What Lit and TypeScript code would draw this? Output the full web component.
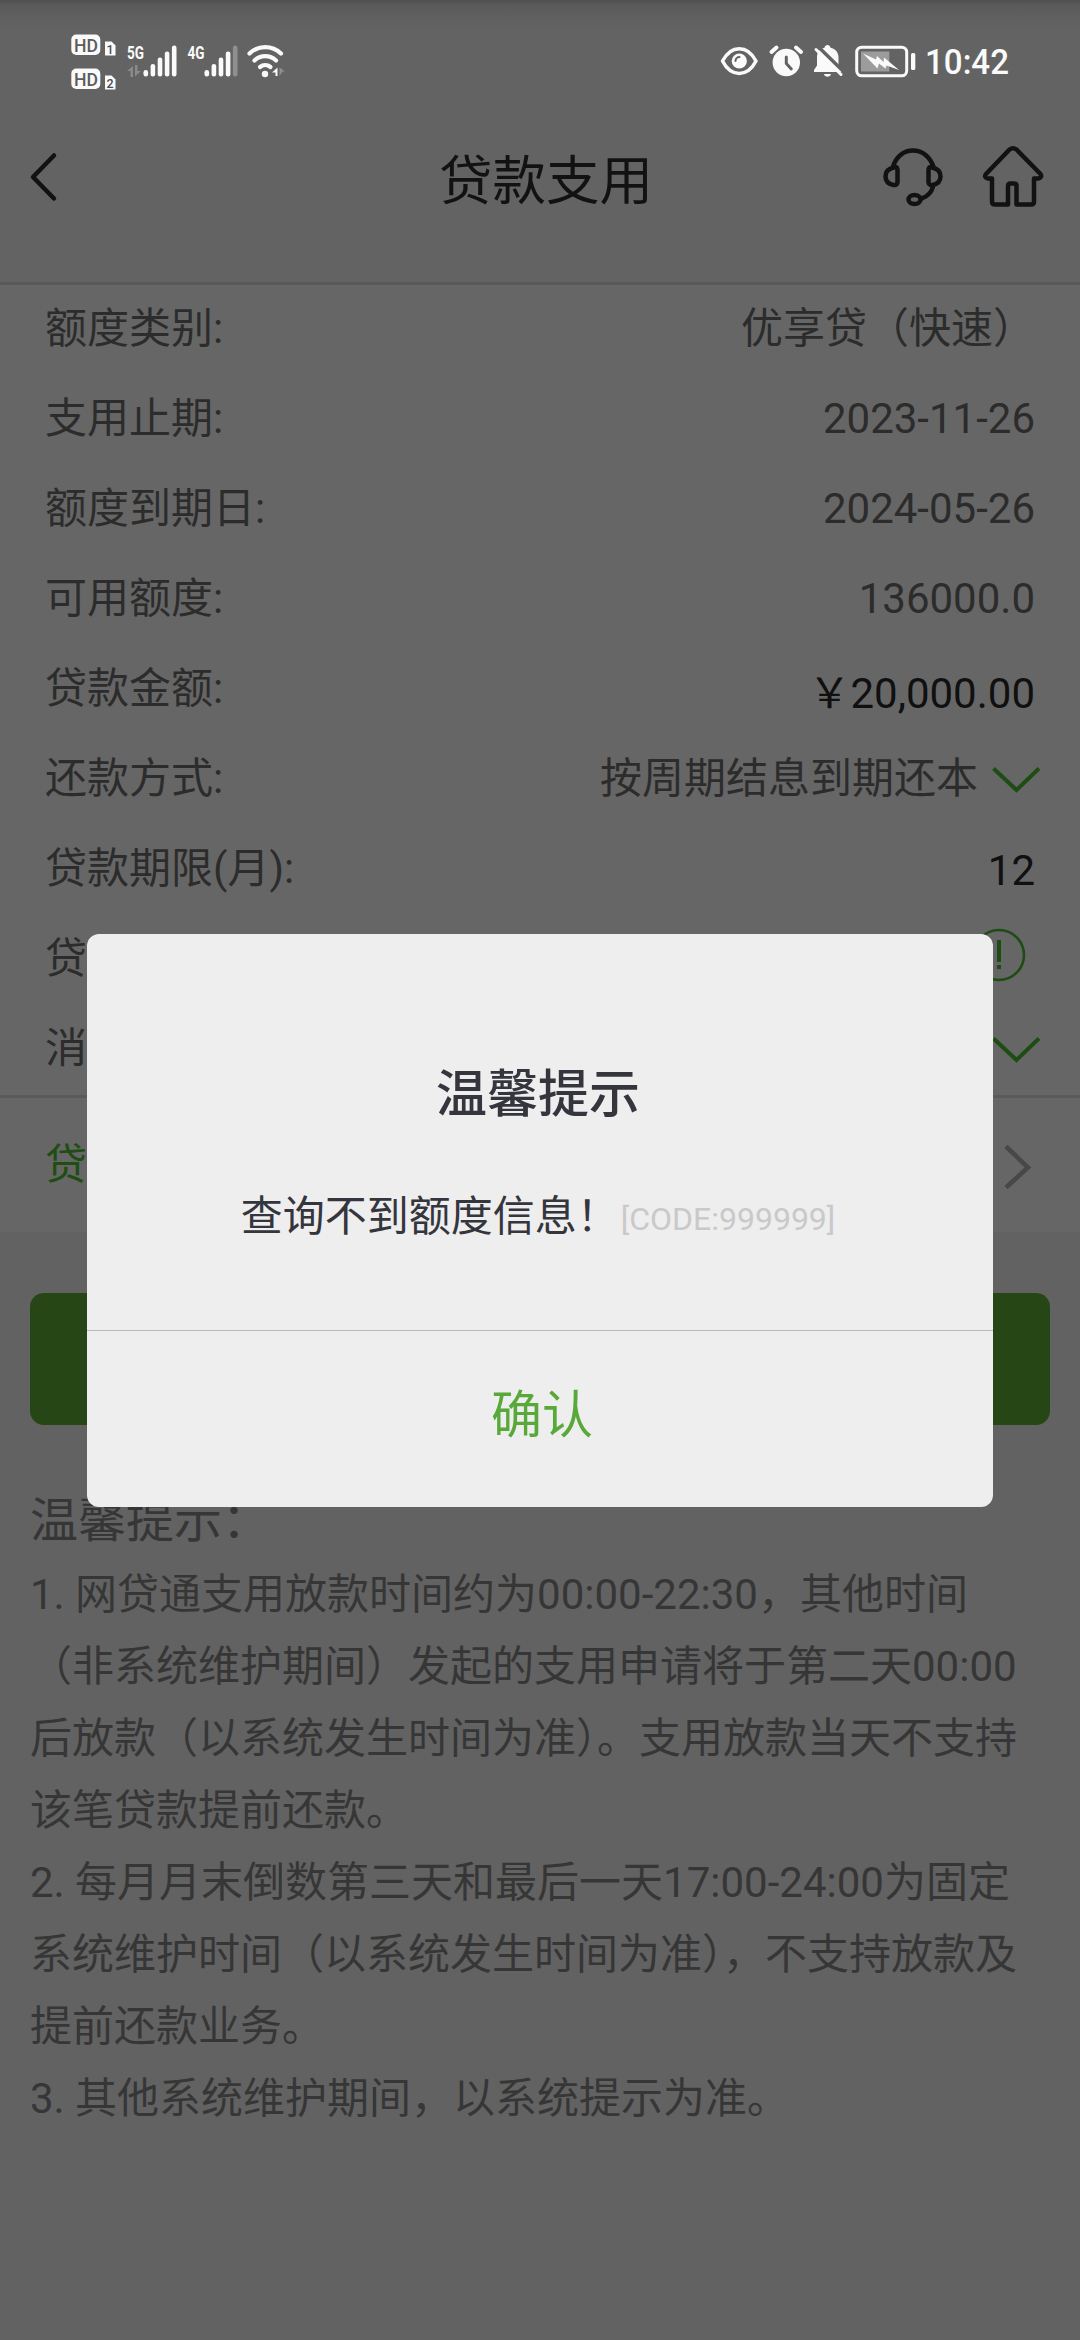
import { LitElement, html, css, svg } from "lit";
import { customElement } from "lit/decorators.js";

interface Row {
  label: string;
  value?: string;
  tone?: "amount" | "term";
  icon?: "down" | "info";
}

const ROWS: Row[] = [
  { label: "额度类别:", value: "优享贷（快速）" },
  { label: "支用止期:", value: "2023-11-26" },
  { label: "额度到期日:", value: "2024-05-26" },
  { label: "可用额度:", value: "136000.0" },
  { label: "贷款金额:", value: "￥20,000.00", tone: "amount" },
  { label: "还款方式:", value: "按周期结息到期还本", icon: "down" },
  { label: "贷款期限(月):", value: "12", tone: "term" },
  { label: "贷", icon: "info" },
  { label: "消", icon: "down" },
];

const HINTS = [
  "1. 网贷通支用放款时间约为00:00-22:30，其他时间（非系统维护期间）发起的支用申请将于第二天00:00后放款（以系统发生时间为准）。支用放款当天不支持该笔贷款提前还款。",
  "2. 每月月末倒数第三天和最后一天17:00-24:00为固定系统维护时间（以系统发生时间为准），不支持放款及提前还款业务。",
  "3. 其他系统维护期间，以系统提示为准。",
];

@customElement("status-bar")
export class StatusBar extends LitElement {
  static styles = css`
    :host {
      display: flex;
      justify-content: space-between;
      height: 124px;
      background: linear-gradient(#505050 0, #5b5b5b 6px, #636363 28px);
    }
    .icons {
      display: block;
      flex: none;
    }
    text {
      font-family: Roboto, sans-serif;
      font-weight: 500;
    }
    .network {
      font-weight: 700;
    }
  `;

  private bars(x: number, dimLast: boolean) {
    const tops = [70, 64, 57.5, 51.5, 45.5];
    return tops.map(
      (top, i) => svg`<rect x=${x + i * 7.1} y=${top} width="4.6" height=${76.5 - top} rx="2.2"
        fill=${dimLast && i === 4 ? "#8f8f8f" : "#fafafa"} />`
    );
  }

  render() {
    return html`
      <svg class="icons" width="320" height="124" viewBox="0 0 320 124">
        ${[34.5, 68.5].map(
          (y, i) => svg`
            <rect x="71.300" y=${y} width="29" height="20.500" rx="5" fill="#fafafa" />
            <text x="74" y=${y + 17} font-size="18.500" textLength="24" lengthAdjust="spacingAndGlyphs" fill="#5c5c5c">HD</text>
            <path d=${`M105 ${y + 7}h6.500l4 4v10h-10.500z`} fill="#fafafa" />
            <text x="106.500" y=${y + 19.5} font-size="12.500" fill="#4c4c4c">${i + 1}</text>`
        )}
        <text class="network" x="127" y="59" font-size="18.500" textLength="17" lengthAdjust="spacingAndGlyphs" fill="#fafafa">5G</text>
        <text class="network" x="187.500" y="59" font-size="18.500" textLength="17" lengthAdjust="spacingAndGlyphs" fill="#fafafa">4G</text>
        <path d="M127 71l6-5v11h-2.500v-6zM135 65v11.500l6-5.500h-3.500v-6z" fill="#8a8a8a" />
        ${this.bars(143.5, false)} ${this.bars(204.5, true)}
        <g fill="none" stroke="#fafafa" stroke-width="4.200" stroke-linecap="round">
          <path d="M249.500 53.500a22.500 22.500 0 0 1 31.500 0" />
          <path d="M254.500 60.500a15.500 15.500 0 0 1 21.500 0" />
          <path d="M260 67a8.500 8.500 0 0 1 10.500 0" />
        </g>
        <circle cx="265" cy="74" r="3.200" fill="#fafafa" />
        <path d="M277.500 67.500v8.500h-2v-3.500h-3.500z" fill="#fafafa" />
        <path d="M279.500 67.500l5.500 4h-2.500l-3 4.500z" fill="#8f8f8f" />
      </svg>
      <svg class="icons" width="380" height="124" viewBox="700 0 380 124">
        <path d="M722.500 61c8.500-16.500 25-16.500 33.500 0c-8.500 16.500-25 16.500-33.500 0z" fill="none" stroke="#fafafa" stroke-width="3.500" stroke-linejoin="round" />
        <circle cx="739.300" cy="61" r="7.600" fill="#fafafa" />
        <path d="M735.500 61a4 4 0 0 1 4-4" fill="none" stroke="#636363" stroke-width="2" stroke-linecap="round" />
        <circle cx="786.300" cy="62.500" r="13.700" fill="#fafafa" />
        <path d="M786.300 57v6.500l5 5.500" fill="none" stroke="#636363" stroke-width="3" stroke-linecap="round" />
        <path d="M771.500 52l5-4.500M801 52l-5-4.500" stroke="#fafafa" stroke-width="4" stroke-linecap="round" />
        <path d="M814 72v-2l3-4.500v-8c0-6 3-9 7.500-9.800c.5-3.500 5.500-3.500 6 0c5 .8 8 4.800 8 9.800v8l3 4.500v2zM824 74h7c-.5 3.500-6.500 3.500-7 0z" fill="#fafafa" />
        <path d="M818.500 47l26 25.500" stroke="#636363" stroke-width="3.500" />
        <path d="M816 49.500l25 25" stroke="#fafafa" stroke-width="3" stroke-linecap="round" />
        <rect x="856.700" y="47.200" width="50" height="28.600" rx="5" fill="none" stroke="#fafafa" stroke-width="3" />
        <rect x="861" y="51.500" width="28.300" height="20" fill="#9c9c9c" />
        <path d="M863 53.500l13 6 1-3.500 6.500 6 .5-4.500 15 12.500-12.500-4.500-1 3-6.500-5-1.500 5z" fill="#fafafa" />
        <rect x="911" y="53" width="4.300" height="17" rx="1.500" fill="#fafafa" />
        <text x="925" y="74" font-size="34.500" textLength="84" lengthAdjust="spacingAndGlyphs" fill="#fafafa">10:42</text>
      </svg>
    `;
  }
}

@customElement("title-bar")
export class TitleBar extends LitElement {
  static styles = css`
    :host {
      display: grid;
      grid-template-columns: 220px 1fr 220px;
      height: 161px;
      border-bottom: 3px solid #595959;
      background: #636363;
      box-sizing: border-box;
    }
    .title {
      margin: 0;
      padding: 19px 0 0 12px;
      text-align: center;
      font-size: 53.5px;
      line-height: 78px;
      font-weight: 400;
      color: #121212;
    }
    .glyphs {
      display: block;
      fill: none;
      stroke: #121212;
      stroke-width: 4.5;
      stroke-linecap: round;
      stroke-linejoin: round;
    }
  `;

  render() {
    return html`
      <svg class="glyphs" width="220" height="150" viewBox="0 124 220 150">
        <path d="M54 155.500L33 177L54 198.500" />
      </svg>
      <h1 class="title">贷款支用</h1>
      <svg class="glyphs" width="220" height="150" viewBox="860 124 220 150">
        <path d="M893 167C895.500 157.500 903 150.500 913 150.500C923 150.500 930.500 157.500 933.500 167" />
        <path d="M894 167.500q3-1.500 3.500 2v13q-.5 3-4 2.500c-5-1-8-4-8-8.500s3-8 8.500-9z" />
        <path d="M932 167.500q-3-1.500-3.500 2v13q.5 3 4 2.500c5-1 8-4 8-8.500s-3-8-8.500-9z" />
        <path d="M933 186.500c-1.500 6-5.500 10-11.500 12" />
        <ellipse cx="914.500" cy="199.500" rx="6" ry="4.500" />
        <path d="M1009.500 149.500q3.500-2.500 7 0L1040.500 174q2 3.500-2.500 4.500h-4V201.500q0 3-3 3h-14.500V186q0-2.500-2.500-2.500h-3.500q-2.500 0-2.500 2.500V204.500h-13q-3 0-3-3V178.500h-4q-4.500-1-2-4.500z" />
      </svg>
    `;
  }
}

@customElement("loan-form")
export class LoanForm extends LitElement {
  static styles = css`
    :host {
      display: flow-root;
      height: 947px;
      background: #666666;
      font-size: 42px;
      line-height: 60px;
    }
    .rows {
      height: 814px;
      margin-top: -1px;
      border-bottom: 3px solid #5a5a5a;
      box-sizing: border-box;
    }
    .row {
      display: flex;
      justify-content: space-between;
      align-items: center;
      height: 90px;
      padding: 0 45px;
      color: #2c2c2c;
    }
    .value {
      display: flex;
      align-items: center;
      gap: 14px;
    }
    .amount,
    .term {
      padding-top: 10px;
      color: #101010;
    }
    .term {
      padding-top: 3px;
    }
    .down {
      margin: 2px -5px 0 0;
    }
    .info {
      margin: 0 9px 8px 0;
    }
    .agreement {
      display: flex;
      justify-content: space-between;
      align-items: center;
      height: 134px;
      padding: 0 48px 0 45px;
      color: #1f4d12;
      box-sizing: border-box;
    }
    svg {
      display: block;
      fill: none;
      stroke: #1d4d12;
      stroke-width: 4;
    }
    .next {
      margin-top: 4px;
      stroke: #484848;
      stroke-width: 4.5;
    }
  `;

  private icon(kind?: string) {
    if (kind === "down")
      return html`<svg class="down" width="48" height="30" viewBox="0 0 48 30">
        <path d="M1.500 3.500L24.500 25L47 3.500" />
      </svg>`;
    if (kind === "info")
      return html`<svg class="info" width="54" height="54" viewBox="0 0 54 54">
        <circle cx="27" cy="27" r="25" stroke-width="2.600" />
        <path d="M27 12v22M27 37v4" />
      </svg>`;
    return null;
  }

  render() {
    return html`
      <div class="rows">
        ${ROWS.map(
          (r) => html`<div class="row">
            <span>${r.label}</span>
            <span class="value ${r.tone ?? ""}">${r.value}${this.icon(r.icon)}</span>
          </div>`
        )}
      </div>
      <div class="agreement">
        <span>贷</span>
        <svg class="next" width="28" height="46" viewBox="0 0 28 46"><path d="M2 2.500L24 23.500L2 43.500" /></svg>
      </div>
    `;
  }
}

@customElement("alert-dialog")
export class AlertDialog extends LitElement {
  static styles = css`
    :host {
      display: flex;
      flex-direction: column;
      width: 906px;
      height: 573px;
      border-radius: 12px;
      background: #eeeeee;
      overflow: hidden;
      text-align: center;
    }
    .body {
      height: 396px;
      padding-right: 4px;
      border-bottom: 1px solid #b8b8b8;
      color: #35353d;
    }
    .heading {
      margin: 0;
      padding-top: 124px;
      font-size: 51px;
      line-height: 74px;
      font-weight: 500;
    }
    .message {
      margin: 0;
      padding-top: 54px;
      font-size: 42px;
      line-height: 62px;
    }
    .code {
      margin-left: 2px;
      font-size: 32px;
      vertical-align: 1px;
      color: #c9c9c9;
    }
    .confirm {
      flex: 1;
      padding: 0 0 17px 4px;
      border: 0;
      background: none;
      font: inherit;
      font-size: 51px;
      color: #58a83a;
    }
  `;

  render() {
    return html`
      <div class="body">
        <h2 class="heading">温馨提示</h2>
        <p class="message">查询不到额度信息！<span class="code">[CODE:999999]</span></p>
      </div>
      <button class="confirm">确认</button>
    `;
  }
}

@customElement("app-root")
export class AppRoot extends LitElement {
  static styles = css`
    :host {
      display: block;
      position: relative;
      width: 1080px;
      height: 2340px;
      overflow: hidden;
      background: #626262;
      font-family: Roboto, "Noto Sans CJK SC", sans-serif;
    }
    .submit {
      height: 132px;
      margin: 61px 30px 0;
      border-radius: 14px;
      background: #264616;
    }
    .hints {
      padding: 58px 30px 0;
      font-size: 42px;
      line-height: 72px;
      color: #363636;
    }
    .hints-title {
      margin: 0 0 1px;
      font-size: 48px;
      font-weight: 400;
      line-height: 75px;
    }
    .hint {
      margin: 0;
    }
    .modal {
      position: absolute;
      inset: 934px 0 auto;
      display: flex;
      justify-content: center;
    }
  `;

  render() {
    return html`
      <status-bar></status-bar>
      <title-bar></title-bar>
      <loan-form></loan-form>
      <div class="submit"></div>
      <section class="hints">
        <h3 class="hints-title">温馨提示：</h3>
        ${HINTS.map((t) => html`<p class="hint">${t}</p>`)}
      </section>
      <div class="modal"><alert-dialog></alert-dialog></div>
    `;
  }
}
